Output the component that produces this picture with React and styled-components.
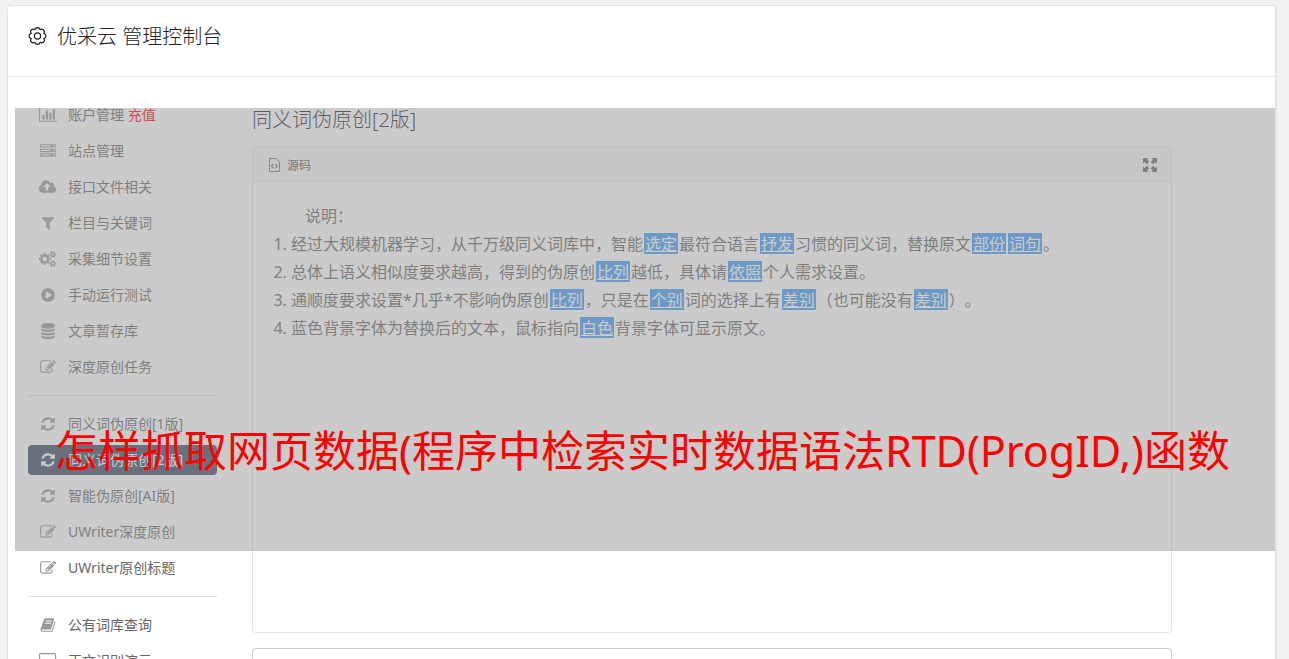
import React from "react";
import styled, { createGlobalStyle } from "styled-components";

const GlobalStyle = createGlobalStyle`
  * { box-sizing: border-box; }
  body {
    margin: 0;
    background: #f2f2f2;
    color: #666;
    font-family: "Noto Sans", "Noto Sans CJK SC", sans-serif;
    font-size: 14px;
    font-weight: 400;
    text-spacing-trim: space-all;
  }
`;

const Page = styled.div`
  height: 100vh;
  overflow: hidden;
  padding: 5px 12px 0 7px;
`;

const Card = styled.div`
  position: relative;
  min-height: 100%;
  background: #fff;
  border: 1px solid #e5e5e5;
  border-right-width: 2px;
  border-radius: 4px;
`;

const Header = styled.header`
  display: flex;
  align-items: center;
  gap: 10px;
  height: 71px;
  padding: 0 20px 8px;
  border-bottom: 1px solid #e5e5e5;
  color: #222;
`;

const Title = styled.h1`
  margin: 0;
  font-size: 20px;
  font-weight: 300;
  line-height: 32px;
`;

const Columns = styled.div`
  display: flex;
  gap: 35px;
  padding: 23px 103px 0 20px;
`;

const Menu = styled.nav`
  display: flex;
  flex: 0 0 189px;
  flex-direction: column;
  gap: 6px;
`;

const MenuLink = styled.a`
  display: flex;
  align-items: center;
  gap: 10px;
  height: 30px;
  padding: 0 10px;
  border-radius: 4px;
  background: ${(p) => (p.$active ? "#374961" : "transparent")};
  color: ${(p) => (p.$active ? "#fff" : "#666")};
  line-height: 30px;
  text-decoration: none;
  white-space: nowrap;
`;

const IconSlot = styled.span`
  display: flex;
  flex: 0 0 20px;
  justify-content: center;
  color: ${(p) => (p.$active ? "#fff" : "#999")};
`;

const Recharge = styled.span`
  color: #f00;
`;

const Divider = styled.hr`
  width: 100%;
  margin: 7px 0;
  border: 0;
  border-top: 1px solid #ddd;
`;

const Main = styled.main`
  flex: 1;
  min-width: 0;
`;

const Heading = styled.h2`
  margin: 0 0 11px;
  padding-top: 5px;
  color: #222;
  font-size: 20px;
  font-weight: 300;
  line-height: 30px;
`;

const Editor = styled.section`
  border: 1px solid #e5e5e5;
  border-radius: 4px;
`;

const Toolbar = styled.div`
  display: flex;
  align-items: center;
  justify-content: space-between;
  height: 35px;
  padding: 2px 14px 0 15px;
  border-bottom: 1px solid #e5e5e5;
  background: #f7f7f7;
`;

const ToolButton = styled.button`
  display: flex;
  align-items: center;
  gap: 6px;
  padding: 0;
  border: 0;
  background: none;
  color: #555;
  font: inherit;
  font-size: 12px;
`;

const Content = styled.div`
  min-height: 450px;
  padding: 20px;
  font-size: 16px;
  line-height: 28px;
`;

const Lead = styled.p`
  margin: 0;
  text-indent: 2em;
`;

const Notes = styled.ol`
  margin: 0;
  padding-left: 18px;
`;

const Swap = styled.span`
  display: inline-block;
  height: 21px;
  margin: 0 1px;
  padding: 0 1px;
  background: #419af5;
  color: #fff;
  line-height: 23px;
  text-decoration: underline;
`;

const Source = styled.textarea`
  display: block;
  width: 100%;
  height: 160px;
  margin-top: 15px;
  border: 1px solid #ccc;
  border-radius: 4px;
  resize: none;
`;

const Banner = styled.div`
  position: absolute;
  top: 102px;
  right: 0;
  left: 7px;
  height: 443px;
  padding: 310px 0 0 40px;
  background: rgba(151, 151, 151, 0.5);
  color: #f00;
  font-size: 43px;
  line-height: 66px;
  white-space: nowrap;
  overflow: hidden;
`;

const GLYPHS = {
  chart: [2048, "M640 896v512h-256v-512h256zm384-512v1024h-256v-1024h256zm1024 1152v128h-2048v-1536h128v1408h1920zm-640-896v768h-256v-768h256zm384-384v1152h-256v-1152h256z"],
  server: [1792, "M128 1408h1024v-128h-1024v128zm0-512h1024v-128h-1024v128zm1568 448q0-40-28-68t-68-28-68 28-28 68 28 68 68 28 68-28 28-68zm-1568-960h1024v-128h-1024v128zm1568 448q0-40-28-68t-68-28-68 28-28 68 28 68 68 28 68-28 28-68zm0-512q0-40-28-68t-68-28-68 28-28 68 28 68 68 28 68-28 28-68zm96 832v384h-1792v-384h1792zm0-512v384h-1792v-384h1792zm0-512v384h-1792v-384h1792z"],
  upload: [1920, "M1280 864q0-14-9-23l-352-352q-9-9-23-9t-23 9l-351 351q-10 12-10 24 0 14 9 23t23 9h224v352q0 13 9.5 22.5t22.5 9.5h192q13 0 22.5-9.5t9.5-22.5v-352h224q13 0 22.5-9.5t9.5-22.5zm640 288q0 159-112.5 271.5t-271.5 112.5h-1088q-185 0-316.5-131.5t-131.5-316.5q0-130 70-240t188-165q-2-30-2-43 0-212 150-362t362-150q156 0 285.5 87t188.5 231q71-62 166-62 106 0 181 75t75 181q0 76-41 138 130 31 213.5 135.5t83.5 238.5z"],
  filter: [1792, "M1595 295q17 41-14 70l-493 493v742q0 42-39 59-13 5-25 5-27 0-45-19l-256-256q-19-19-19-45v-486l-493-493q-31-29-14-70 17-39 59-39h1280q42 0 59 39z"],
  cogs: [1920, "M896 896q0-106-75-181t-181-75-181 75-75 181 75 181 181 75 181-75 75-181zm768 512q0-52-38-90t-90-38-90 38-38 90q0 53 37.5 90.5t90.5 37.5 90.5-37.5 37.5-90.5zm0-1024q0-52-38-90t-90-38-90 38-38 90q0 53 37.5 90.5t90.5 37.5 90.5-37.5 37.5-90.5zm-384 421v185q0 10-7 19.5t-16 10.5l-155 24q-11 35-32 76 34 48 90 115 7 11 7 20 0 12-7 19-23 30-82.5 89.5t-78.5 59.5q-11 0-21-7l-115-90q-37 19-77 31-11 108-23 155-7 24-30 24h-186q-11 0-20-7.5t-10-17.5l-23-153q-34-10-75-31l-118 89q-7 7-20 7-11 0-21-8-144-133-144-160 0-9 7-19 10-14 41-53t47-61q-23-44-35-82l-152-24q-10-1-17-9.5t-7-19.5v-185q0-10 7-19.5t16-10.5l155-24q11-35 32-76-34-48-90-115-7-11-7-20 0-12 7-20 22-30 82-89t79-59q11 0 21 7l115 90q34-18 77-32 11-108 23-154 7-24 30-24h186q11 0 20 7.5t10 17.5l23 153q34 10 75 31l118-89q8-7 20-7 11 0 21 8 144 133 144 160 0 8-7 19-12 16-42 54t-45 60q23 48 34 82l152 23q10 2 17 10.5t7 19.5zm640 533v140q0 16-149 31-12 27-30 52 51 113 51 138 0 4-4 7-122 71-124 71-8 0-46-47t-52-68q-20 2-30 2t-30-2q-14 21-52 68t-46 47q-2 0-124-71-4-3-4-7 0-25 51-138-18-25-30-52-149-15-149-31v-140q0-16 149-31 13-29 30-52-51-113-51-138 0-4 4-7 4-2 35-20t59-34 30-16q8 0 46 46.5t52 67.5q20-2 30-2t30 2q51-71 92-112l6-2q4 0 124 70 4 3 4 7 0 25-51 138 17 23 30 52 149 15 149 31zm0-1024v140q0 16-149 31-12 27-30 52 51 113 51 138 0 4-4 7-122 71-124 71-8 0-46-47t-52-68q-20 2-30 2t-30-2q-14 21-52 68t-46 47q-2 0-124-71-4-3-4-7 0-25 51-138-18-25-30-52-149-15-149-31v-140q0-16 149-31 13-29 30-52-51-113-51-138 0-4 4-7 4-2 35-20t59-34 30-16q8 0 46 46.5t52 67.5q20-2 30-2t30 2q51-71 92-112l6-2q4 0 124 70 4 3 4 7 0 25-51 138 17 23 30 52 149 15 149 31z"],
  play: [1792, "M896 128q209 0 385.5 103t279.5 279.5 103 385.5-103 385.5-279.5 279.5-385.5 103-385.5-103-279.5-279.5-103-385.5 103-385.5 279.5-279.5 385.5-103zm384 823q32-18 32-55t-32-55l-544-320q-31-19-64-1-32 19-32 56v640q0 37 32 56 16 8 32 8 17 0 32-9z"],
  database: [1792, "M896 768q237 0 443-43t325-127v170q0 69-103 128t-280 93.5-385 34.5-385-34.5-280-93.5-103-128v-170q119 84 325 127t443 43zm0 768q237 0 443-43t325-127v170q0 69-103 128t-280 93.5-385 34.5-385-34.5-280-93.5-103-128v-170q119 84 325 127t443 43zm0-384q237 0 443-43t325-127v170q0 69-103 128t-280 93.5-385 34.5-385-34.5-280-93.5-103-128v-170q119 84 325 127t443 43zm0-1152q208 0 385 34.5t280 93.5 103 128v128q0 69-103 128t-280 93.5-385 34.5-385-34.5-280-93.5-103-128v-128q0-69 103-128t280-93.5 385-34.5z"],
  edit: [1792, "M888 1184l116-116-152-152-116 116v56h96v96h56zm440-720q-16-16-33 1l-350 350q-17 17-1 33t33-1l350-350q17-17 1-33zm80 594v190q0 119-84.5 203.5t-203.5 84.5h-832q-119 0-203.5-84.5t-84.5-203.5v-832q0-119 84.5-203.5t203.5-84.5h832q63 0 117 25 15 7 18 23 3 17-9 29l-49 49q-14 14-32 8-23-6-45-6h-832q-66 0-113 47t-47 113v832q0 66 47 113t113 47h832q66 0 113-47t47-113v-126q0-13 9-22l64-64q15-15 35-7t20 29zm-96-738l288 288-672 672h-288v-288zm444 132l-92 92-288-288 92-92q28-28 68-28t68 28l152 152q28 28 28 68t-28 68z"],
  refresh: [1792, "M1639 1056q0 5-1 7-64 268-268 434.5t-478 166.5q-146 0-282.5-55t-243.5-157l-129 129q-19 19-45 19t-45-19-19-45v-448q0-26 19-45t45-19h448q26 0 45 19t19 45-19 45l-137 137q71 66 161 102t187 36q134 0 250-65t186-179q11-17 53-117 8-23 30-23h192q13 0 22.5 9.5t9.5 22.5zm25-800v448q0 26-19 45t-45 19h-448q-26 0-45-19t-19-45 19-45l138-138q-148-137-349-137-134 0-250 65t-186 179q-11 17-53 117-8 23-30 23h-199q-13 0-22.5-9.5t-9.5-22.5v-7q65-268 270-434.5t480-166.5q146 0 284 55.5t245 156.5l130-129q19-19 45-19t45 19 19 45z"],
  book: [1792, "M1703 478q40 57 18 129l-275 906q-19 64-76.5 107.5t-122.5 43.5h-923q-77 0-148.5-53.5t-99.5-131.5q-24-67-2-127 0-4 3-27t4-37q1-8-3-21.5t-3-19.5q2-11 8-21t16.5-23.5 16.5-23.5q23-38 45-91.5t30-91.5q3-10 .5-30t-.5-28q3-11 17-28t17-23q21-36 42-92t25-90q1-9-2.5-32t.5-28q4-13 22-30.5t22-22.5q19-26 42.5-84.5t27.5-96.5q1-8-3-25.5t-2-26.5q2-8 9-18t18-23 17-21q8-12 16.5-30.5t15-35 16-36 19.5-32 26.5-23.5 36-11.5 47.5 5.5l-1 3q38-9 51-9h761q74 0 114 56t18 130l-274 906q-36 119-71.5 153.5t-128.5 34.5h-869q-27 0-38 15-11 16-1 43 24 70 144 70h923q29 0 56-15.5t35-41.5l300-987q7-22 5-57 38 15 59 43zm-1064 2q-4 13 2 22.5t20 9.5h608q13 0 25.5-9.5t16.5-22.5l21-64q4-13-2-22.5t-20-9.5h-608q-13 0-25.5 9.5t-16.5 22.5zm-83 256q-4 13 2 22.5t20 9.5h608q13 0 25.5-9.5t16.5-22.5l21-64q4-13-2-22.5t-20-9.5h-608q-13 0-25.5 9.5t-16.5 22.5z"],
  desktop: [1920, "M1792 992v-832q0-13-9.5-22.5t-22.5-9.500h-1600q-13 0-22.500 9.500t-9.500 22.500v832q0 13 9.500 22.500t22.500 9.500h1600q13 0 22.500-9.500t9.500-22.500zm128-832v1088q0 66-47 113t-113 47h-544q0 37 16 77.500t32 71 16 43.500q0 26-19 45t-45 19h-512q-26 0-45-19t-19-45q0-14 16-44t32-70 16-78h-544q-66 0-113-47t-47-113v-1088q0-66 47-113t113-47h1600q66 0 113 47t47 113z"],
};

function Glyph({ name }) {
  const [width, d] = GLYPHS[name];
  return (
    <svg width={(width * 16) / 1792} height="16" viewBox={`0 0 ${width} 1792`} fill="currentColor" aria-hidden="true">
      <path d={d} />
    </svg>
  );
}

function GearIcon() {
  return (
    <svg width="19" height="20" viewBox="0 0 19 20" fill="none" stroke="currentColor" strokeWidth="1.200" strokeLinejoin="round" aria-hidden="true">
      <path d="M6.900 2.700A2.650 2.650 0 0 1 12.100 2.700A2.650 2.650 0 0 1 15.800 6.400A2.650 2.650 0 0 1 15.800 11.600A2.650 2.650 0 0 1 12.100 15.300A2.650 2.650 0 0 1 6.900 15.300A2.650 2.650 0 0 1 3.200 11.600A2.650 2.650 0 0 1 3.200 6.400A2.650 2.650 0 0 1 6.900 2.700z" />
      <circle cx="9.500" cy="9" r="3.100" />
    </svg>
  );
}

function CodeFileIcon() {
  return (
    <svg width="13" height="14" viewBox="0 0 13 14" fill="none" stroke="#777" aria-hidden="true">
      <path d="M1.500.5h6.500l3.500 3.500v9.500h-10z" />
      <path d="M5.500 6l-2 2.200 2 2.200M7.500 6l2 2.200-2 2.200" strokeWidth="1.300" />
    </svg>
  );
}

function ExpandIcon() {
  return (
    <svg width="14" height="14" viewBox="0 0 14 14" fill="#666" aria-hidden="true">
      <path d="M0 0h5.500L4 1.500 6.300 3.800 3.800 6.300 1.500 4 0 5.500zM14 0v5.500L12.500 4l-2.300 2.300-2.500-2.500L10 1.500 8.500 0zM0 14V8.500L1.500 10l2.300-2.300 2.500 2.500L4 12.500 5.500 14zM14 14H8.500l1.500-1.500-2.300-2.300 2.500-2.500 2.300 2.300L14 8.500z" />
    </svg>
  );
}

const MENU = [
  [
    ["chart", "账户管理", "充值"],
    ["server", "站点管理"],
    ["upload", "接口文件相关"],
    ["filter", "栏目与关键词"],
    ["cogs", "采集细节设置"],
    ["play", "手动运行测试"],
    ["database", "文章暂存库"],
    ["edit", "深度原创任务"],
  ],
  [
    ["refresh", "同义词伪原创[1版]"],
    ["refresh", "同义词伪原创[2版]"],
    ["refresh", "智能伪原创[AI版]"],
    ["edit", "UWriter深度原创"],
    ["edit", "UWriter原创标题"],
  ],
  [
    ["book", "公有词库查询"],
    ["desktop", "正文识别演示"],
  ],
];

const CURRENT = "同义词伪原创[2版]";

export default function App() {
  return (
    <>
      <GlobalStyle />
      <Page>
        <Card>
          <Header>
            <GearIcon />
            <Title>优采云 管理控制台</Title>
          </Header>
          <Columns>
            <Menu>
              {MENU.map((group, i) => (
                <React.Fragment key={i}>
                  {i > 0 && <Divider />}
                  {group.map(([icon, label, extra]) => (
                    <MenuLink key={label} href="#" $active={label === CURRENT}>
                      <IconSlot $active={label === CURRENT}>
                        <Glyph name={icon} />
                      </IconSlot>
                      <span>
                        {label}
                        {extra && <Recharge> {extra}</Recharge>}
                      </span>
                    </MenuLink>
                  ))}
                </React.Fragment>
              ))}
            </Menu>
            <Main>
              <Heading>同义词伪原创[2版]</Heading>
              <Editor>
                <Toolbar>
                  <ToolButton type="button">
                    <CodeFileIcon />
                    源码
                  </ToolButton>
                  <ToolButton type="button" aria-label="全屏">
                    <ExpandIcon />
                  </ToolButton>
                </Toolbar>
                <Content>
                  <Lead>说明：</Lead>
                  <Notes>
                    <li>
                      经过大规模机器学习，从千万级同义词库中，智能<Swap>选定</Swap>最符合语言<Swap>抒发</Swap>习惯的同义词，替换原文<Swap>部份</Swap><Swap>词句</Swap>。
                    </li>
                    <li>
                      总体上语义相似度要求越高，得到的伪原创<Swap>比列</Swap>越低，具体请<Swap>依照</Swap>个人需求设置。
                    </li>
                    <li>
                      通顺度要求设置*几乎*不影响伪原创<Swap>比列</Swap>，只是在<Swap>个别</Swap>词的选择上有<Swap>差别</Swap>（也可能没有<Swap>差别</Swap>）。
                    </li>
                    <li>
                      蓝色背景字体为替换后的文本，鼠标指向<Swap>白色</Swap>背景字体可显示原文。
                    </li>
                  </Notes>
                </Content>
              </Editor>
              <Source aria-label="原文" />
            </Main>
          </Columns>
          <Banner>怎样抓取网页数据(程序中检索实时数据语法RTD(ProgID,)函数</Banner>
        </Card>
      </Page>
    </>
  );
}
